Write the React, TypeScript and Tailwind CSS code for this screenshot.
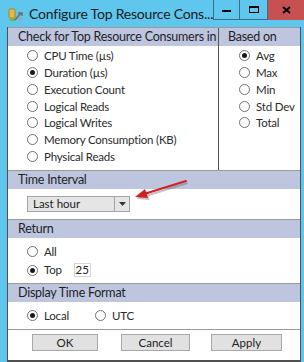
import React, { useState } from 'react';

const font = { fontFamily: 'Lato, "Open Sans", Arial, sans-serif' };

const Radio: React.FC<{ checked?: boolean; label: string; onClick?: () => void }> = ({ checked, label, onClick }) => (
  <div className="flex items-center h-[16.75px] cursor-default" onClick={onClick}>
    <span className="w-[11px] h-[11px] rounded-full border border-[#707070] bg-white flex items-center justify-center shrink-0">
      {checked && <span className="w-[5px] h-[5px] rounded-full bg-[#1a1a1a]" />}
    </span>
    <span className="ml-[6px] text-[11.5px] tracking-[-0.2px] text-[#2b2b2b] whitespace-nowrap">{label}</span>
  </div>
);

const Header: React.FC<{ children: React.ReactNode; className?: string }> = ({ children, className }) => (
  <div className={`h-[18px] bg-[#bdc5df] flex items-center text-[12.5px] tracking-[-0.25px] text-[#1f1f1f] whitespace-nowrap ${className || ''}`}>{children}</div>
);

const App: React.FC = () => {
  const [consumer, setConsumer] = useState('Duration (µs)');
  const [basedOn, setBasedOn] = useState('Avg');
  const [ret, setRet] = useState('Top');
  const [fmt, setFmt] = useState('Local');

  const consumers = ['CPU Time (µs)', 'Duration (µs)', 'Execution Count', 'Logical Reads', 'Logical Writes', 'Memory Consumption (KB)', 'Physical Reads'];
  const aggs = ['Avg', 'Max', 'Min', 'Std Dev', 'Total'];

  return (
    <div className="w-[304px] h-[362px] bg-[#5fc6ee] relative overflow-hidden flex flex-col" style={font}>
      {/* title bar */}
      <div className="h-[27px] flex items-start shrink-0">
        <svg width="15" height="15" viewBox="0 0 15 15" className="ml-[8px] mt-[7px] shrink-0">
          <rect x="1" y="2" width="6" height="9" rx="1" fill="#e8b93a" stroke="#a27c1c" strokeWidth="0.8" />
          <rect x="2" y="11" width="5" height="3" fill="#79b44a" />
          <path d="M7 13 L13 6 M10 6 L14 6 L14 9" stroke="#6d6d6d" strokeWidth="1.6" fill="none" />
          <circle cx="12" cy="12" r="2" fill="#9aa7b3" />
        </svg>
        <span className="ml-[6px] mt-[4px] text-[14px] tracking-[-0.2px] text-[#1b1b1b] whitespace-nowrap leading-[20px]">Configure Top Resource Cons...</span>
        <div className="ml-auto flex h-[20px] shrink-0">
          <div className="w-[26px] h-full border-l border-b border-[#3a6f8c] flex items-center justify-center">
            <span className="w-[9px] h-[2px] bg-black mt-[3px]" />
          </div>
          <div className="w-[28px] h-full border-l border-b border-[#3a6f8c] flex items-center justify-center">
            <span className="w-[10px] h-[7px] border border-black border-t-2" />
          </div>
          <div className="w-[38px] h-full bg-[#c75050] border-l border-[#3a6f8c] flex items-center justify-center">
            <svg width="9" height="8" viewBox="0 0 9 8"><path d="M1 1 L8 7 M8 1 L1 7" stroke="#000" strokeWidth="2" /></svg>
          </div>
        </div>
      </div>

      {/* body */}
      <div className="ml-[7px] mr-[3px] flex-1 bg-white border-l border-r border-b-2 border-[#505050] flex flex-col">
        <div className="flex h-[143px] border-t border-[#9a9a9a]">
          <div className="w-[210px] flex flex-col">
            <Header className="pl-[10px]">Check for Top Resource Consumers in</Header>
            <div className="pl-[19px] pt-[1.5px]">
              {consumers.map(c => (
                <Radio key={c} label={c} checked={consumer === c} onClick={() => setConsumer(c)} />
              ))}
            </div>
          </div>
          <div className="w-px bg-[#555555]" />
          <div className="flex-1 flex flex-col">
            <Header className="pl-[9px]">Based on</Header>
            <div className="pl-[20px] pt-[1.5px]">
              {aggs.map(a => (
                <Radio key={a} label={a} checked={basedOn === a} onClick={() => setBasedOn(a)} />
              ))}
            </div>
          </div>
        </div>

        <div className="border-t border-[#9a9a9a]">
          <Header className="pl-[10px]">Time Interval</Header>
          <div className="h-[30px] pl-[19px] pt-[7px]">
            <div className="w-[103px] h-[16px] bg-[#e5e5e5] border border-[#a5a5a5] flex items-center text-[11.5px] text-[#222]">
              <span className="flex-1 pl-[5px]">Last hour</span>
              <span className="w-[15px] h-full border-l border-[#a5a5a5] flex items-center justify-center">
                <svg width="7" height="4" viewBox="0 0 7 4"><path d="M0 0 L7 0 L3.5 4 Z" fill="#333" /></svg>
              </span>
            </div>
          </div>
        </div>

        <div className="border-t border-[#9a9a9a]">
          <Header className="pl-[10px]">Return</Header>
          <div className="h-[45px] pl-[19px] pt-[5px]">
            <div className="h-[18px]">
              <Radio label="All" checked={ret === 'All'} onClick={() => setRet('All')} />
            </div>
            <div className="flex items-center h-[18px]">
              <Radio label="Top" checked={ret === 'Top'} onClick={() => setRet('Top')} />
              <span className="ml-[12px] w-[17px] h-[14px] border border-[#d8d8d8] text-[11.5px] text-[#222] flex items-center justify-center">25</span>
            </div>
          </div>
        </div>

        <div className="border-t border-[#9a9a9a]">
          <Header className="pl-[10px]">Display Time Format</Header>
          <div className="h-[27px] pl-[19px] pt-[5px] flex">
            <div className="w-[68px]">
              <Radio label="Local" checked={fmt === 'Local'} onClick={() => setFmt('Local')} />
            </div>
            <Radio label="UTC" checked={fmt === 'UTC'} onClick={() => setFmt('UTC')} />
          </div>
        </div>

        <div className="border-t border-[#9a9a9a] flex-1 flex items-start pt-[4px] pl-[24px] text-[11.5px] text-[#222]">
          <button className="w-[66px] h-[17px] bg-[#e1e1e1] border border-[#a8a8a8] leading-none">OK</button>
          <button className="ml-[23px] w-[69px] h-[17px] bg-[#e1e1e1] border border-[#a8a8a8] leading-none">Cancel</button>
          <button className="ml-[21px] w-[71px] h-[17px] bg-[#e1e1e1] border border-[#a8a8a8] leading-none">Apply</button>
        </div>
      </div>

      {/* annotation arrow */}
      <svg className="absolute left-0 top-0 pointer-events-none" width="304" height="362">
        <g opacity="0.35" transform="translate(1.5,2)">
          <line x1="186" y1="181" x2="144" y2="194" stroke="#555" strokeWidth="2.2" />
          <path d="M135 197 L145 189 L148 198 Z" fill="#555" />
        </g>
        <line x1="186" y1="181" x2="144" y2="194" stroke="#d0201f" strokeWidth="2" strokeLinecap="round" />
        <path d="M135 197 L145 189 L148 198 Z" fill="#d0201f" />
      </svg>
    </div>
  );
};

export default App;
